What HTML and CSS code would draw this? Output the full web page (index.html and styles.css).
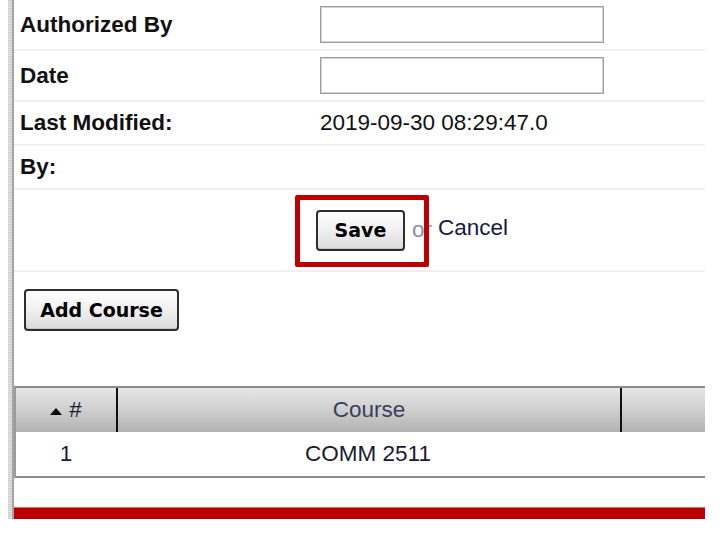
FILE: index.html
```html
<!DOCTYPE html>
<html>
<head>
<meta charset="utf-8">
<link rel="stylesheet" href="styles.css">
</head>
<body>
<div class="page">
  <div class="stripe"></div>
  <div class="main">
    <div class="form">
      <div class="row input-row">
        <div class="label">Authorized By</div>
        <div class="value"><input class="field" type="text"></div>
      </div>
      <div class="row input-row">
        <div class="label">Date</div>
        <div class="value"><input class="field" type="text"></div>
      </div>
      <div class="row text-row">
        <div class="label">Last Modified:</div>
        <div class="value">2019-09-30 08:29:47.0</div>
      </div>
      <div class="row text-row">
        <div class="label">By:</div>
        <div class="value"></div>
      </div>
      <div class="actions">
        <button class="btn save-btn" type="button">Save</button>
        <span class="or">or</span>
        <a class="cancel">Cancel</a>
        <div class="highlight"></div>
      </div>
    </div>
    <div class="add">
      <button class="btn add-btn" type="button">Add Course</button>
    </div>
    <table class="grid">
      <thead>
        <tr>
          <th class="c1"><span class="tri"></span>#</th>
          <th class="c2">Course</th>
          <th class="c3"></th>
        </tr>
      </thead>
      <tbody>
        <tr>
          <td class="c1">1</td>
          <td class="c2">COMM 2511</td>
          <td class="c3"></td>
        </tr>
      </tbody>
    </table>
    <div class="footer-bar"></div>
  </div>
</div>
</body>
</html>
```

FILE: styles.css
```css
html, body {
  margin: 0;
  padding: 0;
  background: #ffffff;
}

body {
  font-family: "Liberation Sans", Arial, sans-serif;
  font-size: 22.5px;
  color: #111111;
}

.page {
  display: flex;
  margin-left: 8px;
  width: 697px;
}

.stripe {
  width: 4px;
  background-color: #d6d6d6;
  background-image: repeating-linear-gradient(180deg, #cfcfcf 0 1px, #e2e2e2 1px 2px);
  border-right: 2px solid #a4a4a4;
}

.main {
  width: 691px;
  display: flex;
  flex-direction: column;
}

.row {
  display: grid;
  grid-template-columns: 306px 1fr;
  align-items: center;
  border-bottom: 2px solid #efefef;
}

.input-row {
  height: 49px;
}

.text-row {
  height: 42px;
}

.label {
  padding-left: 6px;
  font-weight: bold;
  line-height: 26px;
}

.value {
  line-height: 26px;
}

.field {
  display: block;
  box-sizing: border-box;
  width: 284px;
  height: 37px;
  margin: 0;
  border: 1px solid #9e9e9e;
  box-shadow: inset 0 0 0 1px #d2d2d2;
  background: #ffffff;
  padding: 0 4px;
  font: inherit;
}

.actions {
  position: relative;
  height: 80px;
  display: flex;
  align-items: center;
  padding-left: 302px;
  border-bottom: 2px solid #efefef;
}

.btn {
  box-sizing: border-box;
  margin: 0;
  border: 2px solid #2e2e2e;
  border-radius: 4px;
  background: linear-gradient(180deg, #ffffff 0%, #f1f1f1 45%, #dcdcdc 100%);
  box-shadow: inset 0 -1px 0 #c4c4c4, inset 0 1px 0 #ffffff;
  font-family: "DejaVu Sans", Verdana, sans-serif;
  font-weight: bold;
  font-size: 19px;
  color: #000000;
  padding: 0 16px;
  line-height: 20px;
}

.save-btn {
  width: 89px;
  height: 41px;
  padding: 0;
}

.or {
  margin-left: 7px;
  color: #8491a8;
  line-height: 26px;
}

.cancel {
  margin-left: 6px;
  color: #161c3e;
  line-height: 26px;
  margin-top: -4px;
}

.highlight {
  position: absolute;
  left: 281px;
  top: 5px;
  width: 134px;
  height: 72px;
  box-sizing: border-box;
  border: 5px solid #bf0000;
  border-radius: 2px;
}

.add {
  padding: 17px 0 55px 10px;
}

.add-btn {
  width: 155px;
  height: 42px;
  padding: 0;
}

.grid {
  width: 691px;
  border-collapse: separate;
  border-spacing: 0;
  border-top: 2px solid #8c8c8c;
  border-bottom: 2px solid #8c8c8c;
  border-left: 2px solid #9a9a9a;
  table-layout: fixed;
}

.grid th,
.grid td {
  padding: 0;
  text-align: center;
  height: 44px;
  line-height: 26px;
}

.grid th {
  font-weight: normal;
  color: #3a3e5e;
  background: linear-gradient(180deg, #e6e6e6 0%, #cfcfcf 50%, #b2b2b2 100%);
}

.grid th.c2,
.grid th.c3 {
  border-left: 2px solid #111111;
}

.grid th.c1 {
  color: #1e1e2e;
}

.grid .c1 {
  width: 100px;
}

.grid th.c2 {
  width: 502px;
}

.grid td.c2 {
  width: 504px;
}

.grid td {
  color: #1a1a30;
  background: #ffffff;
}

.tri {
  display: inline-block;
  width: 0;
  height: 0;
  border-left: 6px solid transparent;
  border-right: 6px solid transparent;
  border-bottom: 7px solid #000000;
  margin-right: 7px;
  vertical-align: 2px;
}

.footer-bar {
  margin-top: 29px;
  height: 12px;
  background: #bb0000;
  box-shadow: inset 0 1px 0 #d86a6a;
}
```
